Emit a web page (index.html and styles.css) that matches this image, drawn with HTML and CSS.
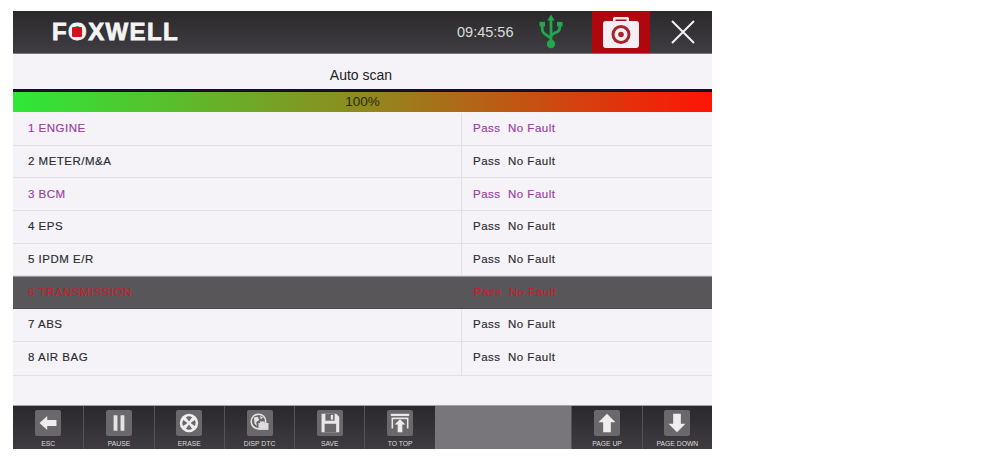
FILE: index.html
```html
<!DOCTYPE html>
<html lang="en">
<head>
    <meta charset="UTF-8">
    <meta name="viewport" content="width=device-width, initial-scale=1.0">
    <title>Auto scan</title>
    <link rel="stylesheet" href="styles.css">
</head>
<body>
<div class="screen">
    <header class="header">
        <div class="logo">F<span class="logo-o">O</span>XWELL</div>
        <div class="clock">09:45:56</div>
        <div class="usb">
            <svg viewBox="0 0 26 38">
                <g fill="none" stroke="#22a64e" stroke-width="3">
                    <path d="M13 5V31"/>
                    <path d="M3.500 11V16C3.500 20 6 21 9 23L13 26"/>
                    <path d="M22.500 11V14C22.500 17 20 19 17 20L13 23"/>
                </g>
                <path d="M13 0L17 6.500H9Z" fill="#22a64e"/>
                <path d="M0.500 8H6.500V13H0.500Z" fill="#22a64e"/>
                <path d="M19.500 8H25.500V13H19.500Z" fill="#22a64e"/>
                <circle cx="13" cy="32" r="4.500" fill="#22a64e"/>
            </svg>
        </div>
        <div class="camera">
            <svg width="38" height="34" viewBox="0 0 38 34">
                <path d="M11 7V3.500C11 2.500 12 2 13 2H25C26 2 27 2.500 27 3.500V7H24.500V4.500H13.500V7Z" fill="#f0e9ec"/>
                <rect x="1" y="6" width="36" height="27" rx="3" fill="#f4eff2"/>
                <circle cx="19" cy="19.500" r="9.500" fill="#a8242c"/>
                <circle cx="19" cy="19.500" r="6.500" fill="#f4eff2"/>
                <circle cx="19" cy="19.500" r="2.800" fill="#a8242c"/>
            </svg>
        </div>
        <div class="close">
            <svg width="26" height="26" viewBox="0 0 26 26">
                <path d="M2 2L24 24M24 2L2 24" stroke="#f2f2f2" stroke-width="2" fill="none"/>
            </svg>
        </div>
    </header>

    <div class="title">Auto scan</div>

    <div class="progress">100%</div>

    <div class="list">
        <div class="row purple"><div class="name">1 ENGINE</div><div class="result">Pass&nbsp;&nbsp;No Fault</div></div>
        <div class="row"><div class="name">2 METER/M&amp;A</div><div class="result">Pass&nbsp;&nbsp;No Fault</div></div>
        <div class="row purple"><div class="name">3 BCM</div><div class="result">Pass&nbsp;&nbsp;No Fault</div></div>
        <div class="row"><div class="name">4 EPS</div><div class="result">Pass&nbsp;&nbsp;No Fault</div></div>
        <div class="row"><div class="name">5 IPDM E/R</div><div class="result">Pass&nbsp;&nbsp;No Fault</div></div>
        <div class="row selected"><div class="name">6 TRANSMISSION</div><div class="result">Pass&nbsp;&nbsp;No Fault</div></div>
        <div class="row"><div class="name">7 ABS</div><div class="result">Pass&nbsp;&nbsp;No Fault</div></div>
        <div class="row"><div class="name">8 AIR BAG</div><div class="result">Pass&nbsp;&nbsp;No Fault</div></div>
    </div>

    <footer class="toolbar">
        <div class="tool">
            <div class="tool-icon">
                <svg viewBox="0 0 26 26"><path d="M2 13L12 4V9H24V17H12V22Z" fill="#eee"/></svg>
            </div>
            <span>ESC</span>
        </div>
        <div class="tool">
            <div class="tool-icon">
                <svg viewBox="0 0 26 26"><path d="M6 3H11V23H6ZM15 3H20V23H15Z" fill="#e4e4e4"/></svg>
            </div>
            <span>PAUSE</span>
        </div>
        <div class="tool">
            <div class="tool-icon">
                <svg viewBox="0 0 26 26">
                    <circle cx="13" cy="13" r="12" fill="#eee"/>
                    <path d="M13 11L9 5.500C11 4 15 4 17 5.500ZM13 15L9 20.500C11 22 15 22 17 20.500ZM11 13L5.500 9C4 11 4 15 5.500 17ZM15 13L20.500 9C22 11 22 15 20.500 17Z" fill="#6a686a"/>
                </svg>
            </div>
            <span>ERASE</span>
        </div>
        <div class="tool">
            <div class="tool-icon">
                <svg viewBox="0 0 26 26">
                    <circle cx="11" cy="11" r="9.500" fill="none" stroke="#e4e4e4" stroke-width="2"/>
                    <path d="M5 6L10 5L12 9L8 12L9 17L6 14ZM13 4L17 6L14 8Z" fill="#e4e4e4"/>
                    <path d="M11 13H24V22H11Z" fill="#ddd"/>
                    <path d="M13 11H19V13H13Z" fill="#ddd"/>
                </svg>
            </div>
            <span>DISP DTC</span>
        </div>
        <div class="tool">
            <div class="tool-icon">
                <svg viewBox="0 0 26 26">
                    <path d="M2 1H21L25 5V25H2Z" fill="#e8e8e8"/>
                    <path d="M7 1H19V10H7Z" fill="#6a686a"/>
                    <path d="M14 2.500H17V8.500H14Z" fill="#e8e8e8"/>
                    <path d="M6 14H21V25H6Z" fill="#6a686a"/>
                </svg>
            </div>
            <span>SAVE</span>
        </div>
        <div class="tool">
            <div class="tool-icon">
                <svg viewBox="0 0 26 26">
                    <path d="M1 1H25V4H1Z" fill="#e8e8e8"/>
                    <path d="M3 20V7H23V20" fill="none" stroke="#e8e8e8" stroke-width="2"/>
                    <path d="M13 8L20 15H16V25H10V15H6Z" fill="#eee"/>
                </svg>
            </div>
            <span>TO TOP</span>
        </div>
        <div class="tool-spacer"></div>
        <div class="tool">
            <div class="tool-icon">
                <svg viewBox="0 0 26 26"><path d="M13 1L24 12H18V25H8V12H2Z" fill="#eee"/></svg>
            </div>
            <span>PAGE UP</span>
        </div>
        <div class="tool">
            <div class="tool-icon">
                <svg viewBox="0 0 26 26"><path d="M13 25L24 14H18V1H8V14H2Z" fill="#eee"/></svg>
            </div>
            <span>PAGE DOWN</span>
        </div>
    </footer>
</div>
</body>
</html>
```

FILE: styles.css
```css
body {
    margin: 0;
    padding: 11px 0 0 13px;
    background: white;
    font-family: "Liberation Sans", Arial, sans-serif;
}

/* Device screen */
.screen {
    width: 699px;
    height: 438px;
    display: flex;
    flex-direction: column;
    background: #f5f2f8;
}

/* Top bar */
.header {
    height: 43px;
    flex: none;
    display: flex;
    align-items: center;
    box-sizing: border-box;
    border-bottom: 1px solid #77757a;
    background: linear-gradient(#2b292b, #3f3d42);
}

.logo {
    margin-left: 39px;
    width: 405px;
    color: #f4f4f4;
    font-size: 24px;
    font-weight: bold;
    letter-spacing: 1.4px;
    -webkit-text-stroke: 0.8px #f4f4f4;
}

.logo-o {
    position: relative;
}

.logo-o::after {
    content: "";
    position: absolute;
    left: 50%;
    top: 50%;
    width: 10px;
    height: 10px;
    margin: -5px 0 0 -6px;
    border-radius: 1px;
    background: #d0121b;
}

.clock {
    width: 74px;
    color: #dcdcdc;
    font-size: 14.500px;
}

.usb {
    width: 40px;
    height: 36px;
    display: flex;
    justify-content: center;
}

.usb svg {
    width: 24px;
    height: 36px;
}

.camera {
    width: 58px;
    height: 42px;
    margin-left: 21px;
    display: flex;
    align-items: center;
    justify-content: center;
    background: #b0070f;
}

.close {
    flex: 1;
    display: flex;
    justify-content: center;
    padding-left: 4px;
}

/* Title and progress */
.title {
    height: 35px;
    flex: none;
    display: flex;
    align-items: center;
    justify-content: center;
    color: #222;
    font-size: 14px;
    box-sizing: border-box;
    padding-top: 7px;
    padding-right: 3px;
}

.progress {
    height: 20px;
    flex: none;
    border-top: 3px solid #14102a;
    background: linear-gradient(to right, #2ee838, #8f8a1e 50%, #ff1405);
    color: #2a2a10;
    font-size: 13.500px;
    line-height: 20px;
    text-align: center;
    margin-bottom: 1px;
}

/* Result list */
.list {
    flex: 1;
}

.row {
    height: 32.700px;
    box-sizing: border-box;
    display: flex;
    border-bottom: 1px solid #e2dfe4;
    color: #2b2b2f;
    font-size: 11.500px;
    letter-spacing: 0.5px;
    -webkit-text-stroke: 0.15px currentColor;
}

.row:last-child {
    height: 34px;
}

.name,
.result {
    box-sizing: border-box;
    display: flex;
    align-items: center;
    padding-bottom: 1px;
}

.row:last-child .name,
.row:last-child .result {
    padding-bottom: 3px;
}

.name {
    width: 449px;
    padding-left: 15px;
    border-right: 1px solid #e2dfe4;
}

.result {
    padding-left: 11px;
}

.purple {
    color: #9a3da0;
}

.selected {
    background: #59565a;
    color: #c2222a;
    border-top: 1px solid #9c9a9d;
    border-bottom: 1px solid #4a484b;
}

.selected .name {
    border-right: none;
    width: 450px;
}

/* Bottom toolbar */
.toolbar {
    height: 43px;
    flex: none;
    display: flex;
    border-top: 1px solid #a5a3a6;
    background: linear-gradient(#2a282c, #3e3c40);
}

.tool {
    width: 70.300px;
    flex: none;
    box-sizing: border-box;
    border-left: 1px solid #555357;
    display: flex;
    flex-direction: column;
    align-items: center;
    padding-top: 4px;
    color: #ddd;
    font-size: 6.800px;
    line-height: 9px;
}

.tool:first-child {
    border-left: none;
}

.tool-icon {
    width: 26px;
    height: 26px;
    margin-bottom: 3px;
    display: flex;
    align-items: center;
    justify-content: center;
    border-radius: 2px;
    background: #6a686a;
}

.tool-icon svg {
    width: 20px;
    height: 20px;
}

.tool-spacer {
    flex: 1;
    background: #78767a;
}
```
